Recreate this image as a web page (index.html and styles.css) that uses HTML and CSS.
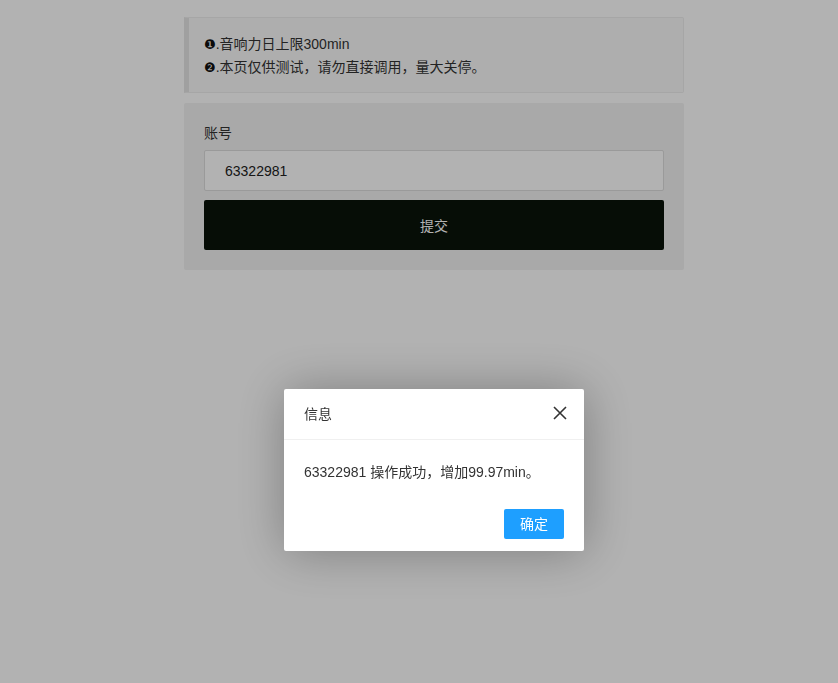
FILE: index.html
```html
<!DOCTYPE html>
<html lang="zh-CN">
<head>
<meta charset="utf-8">
<title>测试</title>
<link rel="stylesheet" href="styles.css">
</head>
<body>
<div class="wrap">
  <blockquote class="quote">
    <div class="line"><span class="num">❶</span>.音响力日上限300min</div>
    <div class="line"><span class="num">❷</span>.本页仅供测试，请勿直接调用，量大关停。</div>
  </blockquote>
  <div class="card">
    <label class="label">账号</label>
    <input class="input" type="text" value="63322981">
    <button class="submit" type="button">提交</button>
  </div>
</div>
<div class="shade"></div>
<div class="layer">
  <div class="layer-title">信息
    <span class="close"><svg width="14" height="14" viewBox="0 0 14 14"><path d="M1 1L13 13M13 1L1 13" stroke="#333" stroke-width="1.6" fill="none"/></svg></span>
  </div>
  <div class="layer-content">63322981 操作成功，增加99.97min。</div>
  <div class="layer-btns"><a class="btn-ok">确定</a></div>
</div>
</body>
</html>
```
FILE: styles.css
```css
html, body { margin: 0; padding: 0; background: #fff; }
body {
  font-family: "Liberation Sans", "Noto Sans CJK SC", sans-serif;
  font-size: 14px;
  color: #333;
  height: 683px;
  overflow: hidden;
}
.wrap {
  width: 500px;
  margin: 17px 0 0 184px;
}
.quote {
  margin: 0 0 10px 0;
  padding: 15px 15px 15px 15px;
  background: #fafafa;
  border: 1px solid #eee;
  border-left: 5px solid #e6e6e6;
  border-radius: 0 2px 2px 0;
  line-height: 22px;
  height: 44px;
}
.quote .line { color: #333; }
.num { font-family: "DejaVu Sans", sans-serif; font-size: 13px; color: #111; }
.card {
  background: #f2f2f2;
  border-radius: 2px;
  padding: 20px 20px 20px 20px;
  height: 127px;
}
.label {
  display: block;
  line-height: 20px;
  margin-top: 0;
  height: 27px;
  color: #333;
}
.input {
  display: block;
  box-sizing: border-box;
  width: 460px;
  height: 41px;
  border: 1px solid #ddd;
  border-radius: 2px;
  background: #fff;
  padding: 0 20px;
  font-family: "Liberation Sans", sans-serif;
  font-size: 14px;
  color: #222;
  outline: none;
  margin: 0;
}
.submit {
  display: block;
  width: 460px;
  height: 50px;
  margin-top: 9px;
  border: 0;
  border-radius: 2px;
  background: #091309;
  color: #fff;
  font-family: "Liberation Sans", "Noto Sans CJK SC", sans-serif;
  font-size: 14px;
}
.shade {
  position: fixed;
  inset: 0;
  background: rgba(0,0,0,0.3);
}
.layer {
  position: fixed;
  left: 284px;
  top: 389px;
  width: 300px;
  height: 162px;
  background: #fff;
  border-radius: 2px;
  box-shadow: 1px 1px 50px rgba(0,0,0,0.3);
}
.layer-title {
  position: relative;
  height: 50px;
  line-height: 50px;
  padding: 0 20px;
  border-bottom: 1px solid #f0f0f0;
  color: #333;
  font-size: 14px;
}
.close {
  position: absolute;
  right: 17px;
  top: 17px;
  width: 14px;
  height: 14px;
  line-height: 0;
}
.layer-content {
  padding: 20px;
  line-height: 24px;
  height: 24px;
  color: #333;
}
.layer-btns {
  display: flex;
  justify-content: flex-end;
  padding: 5px 20px 0 20px;
}
.btn-ok {
  display: block;
  width: 60px;
  height: 30px;
  line-height: 30px;
  text-align: center;
  background: #1e9fff;
  color: #fff;
  border-radius: 2px;
  font-size: 14px;
}
```
